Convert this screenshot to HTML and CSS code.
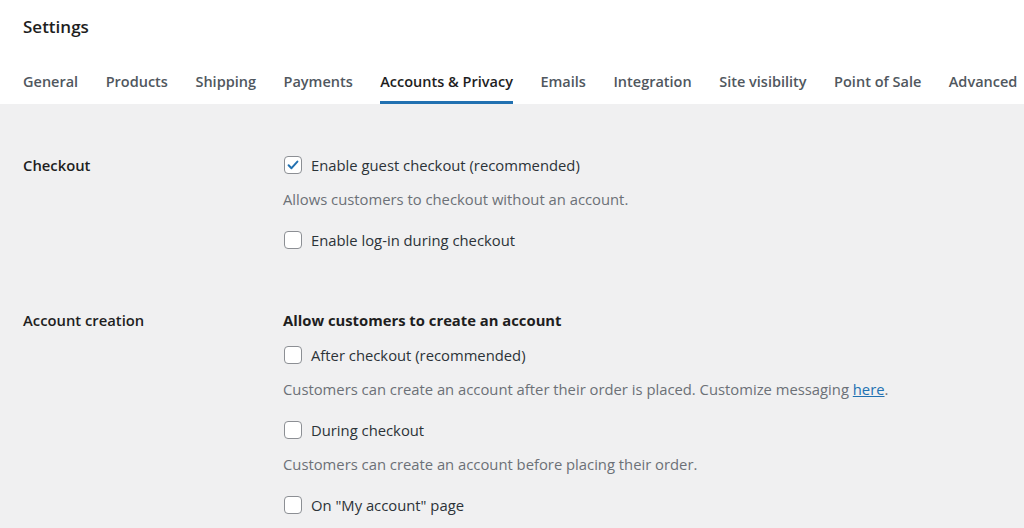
FILE: index.html
```html
<!DOCTYPE html>
<html lang="en">
<head>
    <meta charset="UTF-8">
    <title>Settings</title>
    <link rel="stylesheet" href="styles.css">
</head>
<body>
    <header class="page-header">
        <h1 class="page-title">Settings</h1>
        <nav class="tabs">
            <a class="tab">General</a>
            <a class="tab">Products</a>
            <a class="tab">Shipping</a>
            <a class="tab">Payments</a>
            <a class="tab active">Accounts &amp; Privacy</a>
            <a class="tab">Emails</a>
            <a class="tab">Integration</a>
            <a class="tab">Site visibility</a>
            <a class="tab">Point of Sale</a>
            <a class="tab">Advanced</a>
        </nav>
    </header>

    <main class="settings">
        <section class="row">
            <div class="row-label">Checkout</div>
            <div class="row-fields">
                <label class="check"><span class="box checked"><svg viewBox="0 0 16 16" width="16" height="16"><path d="M3.6 8.3l2.9 2.9 5.9-6.6" fill="none" stroke="#2271b1" stroke-width="2" stroke-linecap="round" stroke-linejoin="round"/></svg></span>Enable guest checkout (recommended)</label>
                <p class="desc">Allows customers to checkout without an account.</p>
                <label class="check"><span class="box"></span>Enable log-in during checkout</label>
            </div>
        </section>

        <section class="row row-second">
            <div class="row-label">Account creation</div>
            <div class="row-fields">
                <div class="group-title">Allow customers to create an account</div>
                <label class="check"><span class="box"></span>After checkout (recommended)</label>
                <p class="desc">Customers can create an account after their order is placed. Customize messaging <a class="link" href="#">here</a>.</p>
                <label class="check"><span class="box"></span>During checkout</label>
                <p class="desc">Customers can create an account before placing their order.</p>
                <label class="check"><span class="box"></span>On "My account" page</label>
            </div>
        </section>
    </main>
</body>
</html>
```

FILE: styles.css
```css
body {
    margin: 0;
    font-family: 'Open Sans', 'Noto Sans', sans-serif;
    font-size: 14.8px;
    color: #1e1e1e;
    background: #f0f0f1;
}
.page-header {
    background: #ffffff;
    padding: 0 23px;
}
.page-title {
    margin: 0;
    padding-top: 15px;
    height: 43px;
    font-size: 17px;
    font-weight: 600;
    line-height: 24px;
}
.tabs {
    display: flex;
    gap: 27.5px;
    height: 46px;
    white-space: nowrap;
}
.tab {
    display: block;
    color: #50575e;
    font-size: 14.5px;
    font-weight: 600;
    line-height: 44px;
    padding-top: 2px;
    border-bottom: 3px solid transparent;
    box-sizing: border-box;
    height: 46px;
}
.tab.active {
    color: #1e1e1e;
    border-bottom-color: #2271b1;
}
.settings {
    padding: 49px 23px 0;
}
.row {
    display: flex;
}
.row-second {
    margin-top: 56px;
}
.row-label {
    width: 260px;
    flex-shrink: 0;
    font-weight: 600;
    line-height: 24px;
}
.row-fields {
    display: flex;
    flex-direction: column;
}
.check {
    display: flex;
    align-items: center;
    gap: 9px;
    height: 24px;
    line-height: 24px;
    color: #2c3338;
}
.box {
    width: 16px;
    height: 16px;
    border: 1px solid #8c8f94;
    border-radius: 4px;
    background: #ffffff;
    display: flex;
    align-items: center;
    justify-content: center;
    margin-left: 1px;
}
.desc {
    margin: 10px 0 17px;
    color: #6c7177;
    line-height: 24px;
}
.group-title {
    font-weight: 700;
    line-height: 24px;
    margin-bottom: 11px;
}
.link {
    color: #2271b1;
}
```
